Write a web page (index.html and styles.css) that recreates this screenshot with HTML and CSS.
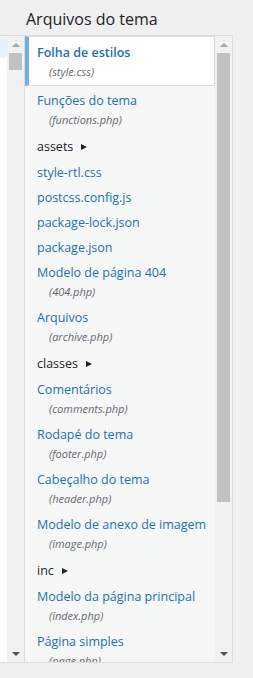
FILE: index.html
```html
<!DOCTYPE html>
<html lang="pt-BR">
<head>
<meta charset="utf-8">
<title>Arquivos do tema</title>
<link rel="stylesheet" href="styles.css">
</head>
<body>
<div class="wrap">
  <h2 class="title">Arquivos do tema</h2>
  <div class="panes">
    <div class="editor">
      <div class="code"><div class="active-line"></div></div>
      <div class="scrollbar">
        <div class="sb-btn"><span class="tri-up"></span></div>
        <div class="sb-track"><div class="sb-thumb thumb-editor"></div></div>
        <div class="sb-btn"><span class="tri-down"></span></div>
      </div>
    </div>
    <div class="files">
      <ul class="tree">
        <li class="item selected"><a class="link highlight">Folha de estilos<span class="nonessential">(style.css)</span></a></li>
        <li class="item"><a class="link">Funções do tema<span class="nonessential">(functions.php)</span></a></li>
        <li class="item folder"><span class="folder-label">assets</span></li>
        <li class="item"><a class="link">style-rtl.css</a></li>
        <li class="item"><a class="link">postcss.config.js</a></li>
        <li class="item"><a class="link">package-lock.json</a></li>
        <li class="item"><a class="link">package.json</a></li>
        <li class="item"><a class="link">Modelo de página 404<span class="nonessential">(404.php)</span></a></li>
        <li class="item"><a class="link">Arquivos<span class="nonessential">(archive.php)</span></a></li>
        <li class="item folder"><span class="folder-label">classes</span></li>
        <li class="item"><a class="link">Comentários<span class="nonessential">(comments.php)</span></a></li>
        <li class="item"><a class="link">Rodapé do tema<span class="nonessential">(footer.php)</span></a></li>
        <li class="item"><a class="link">Cabeçalho do tema<span class="nonessential">(header.php)</span></a></li>
        <li class="item"><a class="link">Modelo de anexo de imagem<span class="nonessential">(image.php)</span></a></li>
        <li class="item folder"><span class="folder-label">inc</span></li>
        <li class="item"><a class="link">Modelo da página principal<span class="nonessential">(index.php)</span></a></li>
        <li class="item"><a class="link">Página simples<span class="nonessential">(page.php)</span></a></li>
      </ul>
      <div class="scrollbar">
        <div class="sb-btn"><span class="tri-up"></span></div>
        <div class="sb-track"><div class="sb-thumb thumb-files"></div></div>
        <div class="sb-btn"><span class="tri-down"></span></div>
      </div>
    </div>
  </div>
</div>
</body>
</html>
```
FILE: styles.css
```css
html, body {
  margin: 0;
  padding: 0;
  background: #f0f0f1;
}
body {
  font-family: "Open Sans", "Noto Sans", sans-serif;
  font-size: 12.5px;
  color: #1d2327;
  width: 253px;
  height: 678px;
  overflow: hidden;
}
.wrap {
  display: flex;
  flex-direction: column;
}
.title {
  margin: 0 0 5px 0;
  padding: 8px 0 0 26px;
  font-size: 16px;
  line-height: 22px;
  font-weight: 400;
  color: #1d2327;
}
.panes {
  display: flex;
  height: 628px;
}
.editor {
  width: 24px;
  display: flex;
  border-top: 1px solid #dcdcde;
  border-bottom: 1px solid #dcdcde;
  background: #fff;
}
.code {
  width: 7px;
  background: #fff;
}
.active-line {
  height: 22px;
  background: #e8f2ff;
}
.scrollbar {
  width: 17px;
  display: flex;
  flex-direction: column;
  background: #f1f1f1;
}
.sb-btn {
  height: 17px;
  display: flex;
  align-items: center;
  justify-content: center;
  flex: none;
}
.tri-up {
  width: 0;
  height: 0;
  border-left: 4px solid transparent;
  border-right: 4px solid transparent;
  border-bottom: 4px solid #a3a3a3;
}
.tri-down {
  width: 0;
  height: 0;
  border-left: 4px solid transparent;
  border-right: 4px solid transparent;
  border-top: 4px solid #505050;
}
.sb-track {
  flex: 1;
  display: flex;
  flex-direction: column;
}
.sb-thumb {
  margin: 0 2px;
  background: #c1c1c1;
}
.thumb-editor {
  height: 17px;
}
.thumb-files {
  height: 449px;
}
.files {
  width: 207px;
  display: flex;
  border: 1px solid #dcdcde;
  background: #f6f7f7;
}
.tree {
  list-style: none;
  margin: 0;
  padding: 0;
  width: 190px;
  overflow: hidden;
  background: #f6f7f7;
}
.item {
  margin: 0;
}
.link {
  display: block;
  padding: 4px 0 2px 12px;
  line-height: 19px;
  color: #2271b1;
  text-decoration: none;
  white-space: nowrap;
}
.selected {
  margin-bottom: 1px;
}
.highlight {
  background: #fff;
  border: 1px solid #dcdcde;
  border-left: 4px solid #72aee6;
  padding: 6px 0 3px 8px;
  font-weight: 600;
}
.nonessential {
  display: block;
  height: 20px;
  line-height: 19px;
  padding-left: 12px;
  font-size: 11px;
  font-style: italic;
  font-weight: 400;
  color: #646970;
}
.folder-label {
  display: flex;
  align-items: center;
  padding: 5px 0 3px 12px;
  line-height: 19px;
  color: #1d2327;
}
.folder-label::after {
  content: "";
  margin-left: 8px;
  width: 0;
  height: 0;
  border-left: 6px solid #1d2327;
  border-top: 3.5px solid transparent;
  border-bottom: 3.5px solid transparent;
}
```
